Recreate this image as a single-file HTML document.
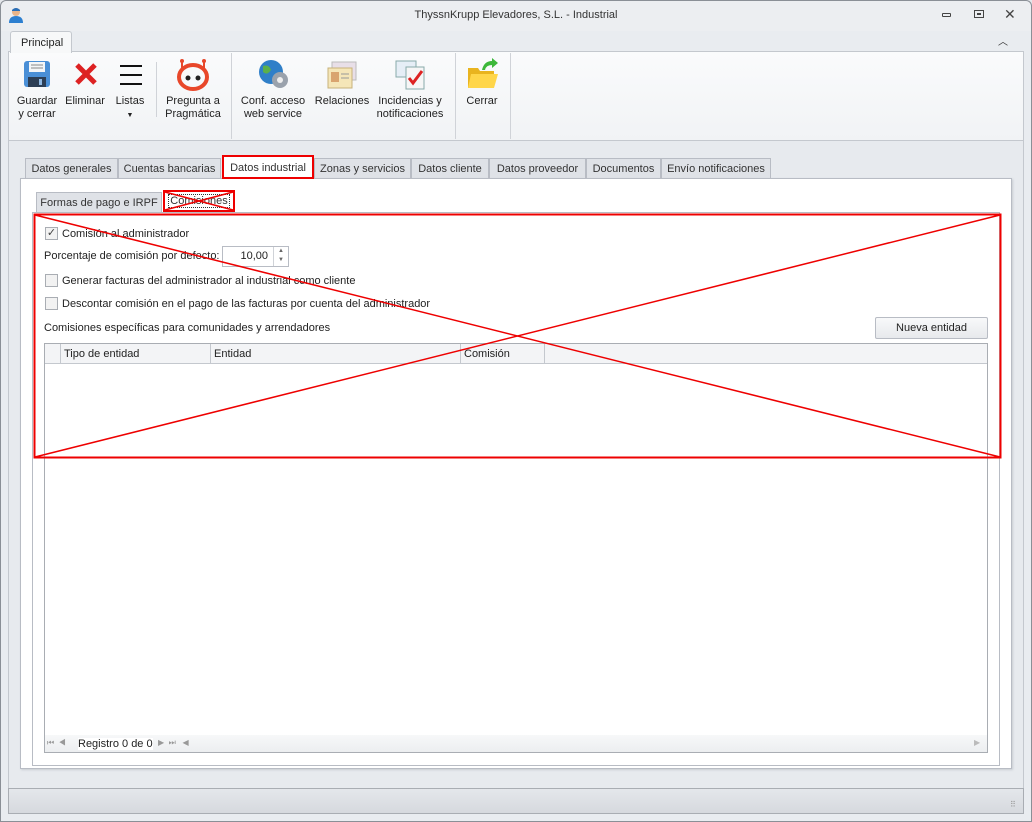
<!DOCTYPE html>
<html><head><meta charset="utf-8"><style>
*{box-sizing:border-box;margin:0;padding:0}
body{width:1032px;height:822px;overflow:hidden;background:#e4e7eb;font-family:"Liberation Sans",sans-serif;font-size:11px;color:#222;position:relative}
.a{position:absolute}
.tab{position:absolute;top:158px;height:20px;background:#dfe2e7;border:1px solid #b8bcc4;border-bottom:none;padding:4px 0 0 0;text-align:center;font-size:11px;color:#333;white-space:nowrap;overflow:hidden}
.cb{position:absolute;width:13px;height:13px;border:1px solid #a9adb3;background:#f2f2f2}
.lbl{position:absolute;white-space:nowrap}
.btxt{position:absolute;text-align:center;line-height:13px;font-size:11px;color:#222;white-space:nowrap}
.sep{position:absolute;width:1px;background:#d0d3d8}
</style></head><body>
<div class="a" style="left:0;top:0;width:1032px;height:822px;border:1px solid #8a8f96;border-radius:6px 6px 0 0;background:#e9ecf0"></div>
<div class="a" style="left:1px;top:1px;width:1030px;height:30px;background:#eceef1;border-radius:6px 6px 0 0"></div>
<svg class="a" style="left:8px;top:6px" width="16" height="18"><circle cx="8" cy="6" r="4" fill="#e8b48a"/><path d="M4 4 Q8 0 12 4 L12 5 L4 5Z" fill="#2a6fb8"/><path d="M1 17 Q1 10 8 10 Q15 10 15 17Z" fill="#2d7fd0"/></svg>
<div class="lbl" style="left:0;width:1032px;top:9px;text-align:center;font-size:11px;color:#333">ThyssnKrupp Elevadores, S.L. - Industrial</div>
<div class="a" style="left:942px;top:13px;width:9px;height:4px;border:1px solid #444;border-radius:1px"></div>
<div class="a" style="left:974px;top:10px;width:10px;height:8px;border:1px solid #444"><div style="margin:2px 2px;width:4px;height:2px;border:1px solid #444"></div></div>
<div class="lbl" style="left:1004px;top:6px;font-size:14px;color:#444">✕</div>
<div class="lbl" style="left:998px;top:33px;font-size:10px;color:#333">︿</div>
<div class="a" style="left:10px;top:31px;width:62px;height:22px;background:#f7f8f9;border:1px solid #c4c8ce;border-bottom:none;border-radius:3px 3px 0 0;padding:5px 0 0 10px;z-index:2">Principal</div>
<div class="a" style="left:8px;top:51px;width:1016px;height:90px;background:linear-gradient(#fafbfc,#f1f3f5);border:1px solid #c4c8ce"></div>
<div class="sep" style="left:156px;top:62px;height:55px"></div>
<div class="sep" style="left:231px;top:53px;height:86px"></div>
<div class="sep" style="left:455px;top:53px;height:86px"></div>
<div class="sep" style="left:510px;top:53px;height:86px"></div>
<svg class="a" style="left:23px;top:60px" width="28" height="28"><rect x="1" y="1" width="26" height="26" rx="3" fill="#4a8fd6"/><rect x="6" y="2" width="16" height="10" fill="#f4f6f8"/><line x1="8" y1="5" x2="20" y2="5" stroke="#888"/><line x1="8" y1="8" x2="20" y2="8" stroke="#888"/><rect x="5" y="17" width="18" height="10" fill="#2c3e55"/><rect x="16" y="19" width="3" height="6" fill="#8fb7e0"/></svg>
<svg class="a" style="left:74px;top:62px" width="24" height="24"><path d="M3 3L21 21M21 3L3 21" stroke="#d22" stroke-width="5"/></svg>
<svg class="a" style="left:119px;top:64px" width="24" height="22"><path d="M1 2H23M1 11H23M1 20H23" stroke="#111" stroke-width="2"/></svg>
<svg class="a" style="left:176px;top:57px" width="34" height="34"><circle cx="6" cy="4" r="2" fill="#e8472a"/><circle cx="28" cy="4" r="2" fill="#e8472a"/><path d="M6 4V12M28 4V12" stroke="#e8472a" stroke-width="2"/><ellipse cx="17" cy="20" rx="14" ry="12" fill="none" stroke="#e8472a" stroke-width="4"/><circle cx="12" cy="21" r="2.5" fill="#222"/><circle cx="22" cy="21" r="2.5" fill="#222"/></svg>
<svg class="a" style="left:257px;top:58px" width="34" height="32"><circle cx="14" cy="14" r="12" fill="#2f7fc8"/><path d="M6 8Q12 6 14 12Q10 18 6 14Z" fill="#5bb04a"/><circle cx="23" cy="22" r="8" fill="#9aa2ac"/><circle cx="23" cy="22" r="3" fill="#eee"/></svg>
<svg class="a" style="left:326px;top:60px" width="32" height="30"><rect x="6" y="2" width="24" height="18" fill="#e8dfe8" stroke="#bbb"/><rect x="2" y="8" width="24" height="20" fill="#f5e6b8" stroke="#c8b27a"/><rect x="5" y="12" width="8" height="10" fill="#d9a46f"/><path d="M15 14H23M15 18H23" stroke="#999"/></svg>
<svg class="a" style="left:394px;top:58px" width="34" height="32"><rect x="2" y="3" width="20" height="16" fill="#e6eef6" stroke="#8aa"/><rect x="12" y="9" width="18" height="22" fill="#f6f6f6" stroke="#8aa"/><path d="M15 20L19 25L28 13" stroke="#d22" stroke-width="3" fill="none"/></svg>
<svg class="a" style="left:466px;top:58px" width="34" height="32"><path d="M2 10H12L14 13H28V30H2Z" fill="#e9b41f"/><path d="M5 16H32L28 30H2Z" fill="#ffd64a"/><path d="M16 12Q18 3 26 3L26 0L32 5L26 10L26 7Q20 7 19 12Z" fill="#3db83a"/></svg>
<div class="btxt" style="left:14px;width:46px;top:95px">Guardar<br>y cerrar</div>
<div class="btxt" style="left:64px;width:42px;top:95px">Eliminar</div>
<div class="btxt" style="left:112px;width:36px;top:95px">Listas<br><span style="font-size:7px">▼</span></div>
<div class="btxt" style="left:162px;width:62px;top:95px">Pregunta a<br>Pragmática</div>
<div class="btxt" style="left:238px;width:70px;top:95px">Conf. acceso<br>web service</div>
<div class="btxt" style="left:312px;width:60px;top:95px">Relaciones</div>
<div class="btxt" style="left:374px;width:72px;top:95px">Incidencias y<br>notificaciones</div>
<div class="btxt" style="left:460px;width:44px;top:95px">Cerrar</div>
<div class="a" style="left:8px;top:141px;width:1016px;height:647px;background:#e7eaee;border-left:1px solid #c4c8ce;border-right:1px solid #c4c8ce"></div>
<div class="tab" style="left:25px;width:93px">Datos generales</div>
<div class="tab" style="left:118px;width:103px">Cuentas bancarias</div>
<div class="tab" style="left:222px;top:155px;height:24px;width:92px;background:#fff;border:2px solid #e00;z-index:3;padding-top:5px">Datos industrial</div>
<div class="tab" style="left:314px;width:97px">Zonas y servicios</div>
<div class="tab" style="left:411px;width:78px">Datos cliente</div>
<div class="tab" style="left:489px;width:97px">Datos proveedor</div>
<div class="tab" style="left:586px;width:75px">Documentos</div>
<div class="tab" style="left:661px;width:110px">Envío notificaciones</div>
<div class="a" style="left:20px;top:178px;width:992px;height:591px;background:#fff;border:1px solid #b8bcc4;box-shadow:1px 1px 2px #c8ccd2"></div>
<div class="tab" style="left:36px;top:192px;width:126px;height:20px">Formas de pago e IRPF</div>
<div class="tab" style="left:163px;top:190px;width:72px;height:22px;background:#fff;border:2px solid #e00;z-index:3;padding-top:3px"><span style="border:1px dotted #333;padding:0 1px">Comisiones</span></div>
<div class="a" style="left:32px;top:212px;width:968px;height:554px;border:1px solid #b8bcc4;background:#fff"></div>
<div class="cb" style="left:45px;top:227px;font-size:11px;line-height:11px;text-align:center;color:#444">✓</div>
<div class="lbl" style="left:62px;top:228px">Comisión al administrador</div>
<div class="lbl" style="left:44px;top:250px">Porcentaje de comisión por defecto:</div>
<div class="a" style="left:222px;top:246px;width:67px;height:21px;border:1px solid #b8bcc4;background:#fff"><div style="position:absolute;right:20px;top:3px">10,00</div><div style="position:absolute;right:0;top:0;width:15px;height:19px;border-left:1px solid #d0d3d8;font-size:6px;color:#666;text-align:center;line-height:9px">▲<br>▼</div></div>
<div class="cb" style="left:45px;top:274px"></div>
<div class="lbl" style="left:62px;top:275px">Generar facturas del administrador al industrial como cliente</div>
<div class="cb" style="left:45px;top:297px"></div>
<div class="lbl" style="left:62px;top:298px">Descontar comisión en el pago de las facturas por cuenta del administrador</div>
<div class="lbl" style="left:44px;top:322px">Comisiones específicas para comunidades y arrendadores</div>
<div class="a" style="left:875px;top:317px;width:113px;height:22px;border:1px solid #b8bcc4;border-radius:2px;background:linear-gradient(#f8f9fa,#e7e9ec);text-align:center;padding-top:4px">Nueva entidad</div>
<div class="a" style="left:44px;top:343px;width:944px;height:410px;border:1px solid #a9adb3;background:#fff"></div>
<div class="a" style="left:45px;top:344px;width:942px;height:20px;background:#f3f4f6;border-bottom:1px solid #c4c8ce"></div>
<div class="a" style="left:60px;top:344px;width:1px;height:20px;background:#c4c8ce"></div>
<div class="a" style="left:210px;top:344px;width:1px;height:20px;background:#c4c8ce"></div>
<div class="a" style="left:460px;top:344px;width:1px;height:20px;background:#c4c8ce"></div>
<div class="a" style="left:544px;top:344px;width:1px;height:20px;background:#c4c8ce"></div>
<div class="lbl" style="left:64px;top:348px">Tipo de entidad</div>
<div class="lbl" style="left:214px;top:348px">Entidad</div>
<div class="lbl" style="left:464px;top:348px">Comisión</div>
<div class="a" style="left:45px;top:735px;width:942px;height:17px;background:linear-gradient(#f7f8f9,#eceef0)"></div>
<div class="lbl" style="left:47px;top:738px;font-size:8px;color:#999">⏮ &nbsp;◀</div>
<div class="lbl" style="left:78px;top:738px;background:#fff">Registro 0 de 0</div>
<div class="lbl" style="left:158px;top:738px;font-size:8px;color:#999">▶ &nbsp;⏭ &nbsp;&nbsp;◀</div>
<div class="lbl" style="left:974px;top:738px;font-size:8px;color:#bbb">▶</div>
<div class="a" style="left:8px;top:788px;width:1016px;height:26px;background:linear-gradient(#e4e7eb,#d6d9de);border:1px solid #a9adb3"></div>
<div class="lbl" style="left:1010px;top:800px;font-size:8px;color:#999">⠿</div>
<svg class="a" style="left:0;top:0;z-index:5" width="1032" height="822"><rect x="34.5" y="214.5" width="966" height="243" fill="none" stroke="#e00" stroke-width="2"/><line x1="35" y1="215" x2="1000" y2="457" stroke="#e00" stroke-width="1.5"/><line x1="1000" y1="215" x2="35" y2="457" stroke="#e00" stroke-width="1.5"/><line x1="165" y1="192" x2="233" y2="210" stroke="#e00" stroke-width="1.5"/><line x1="233" y1="192" x2="165" y2="210" stroke="#e00" stroke-width="1.5"/></svg>
</body></html>
